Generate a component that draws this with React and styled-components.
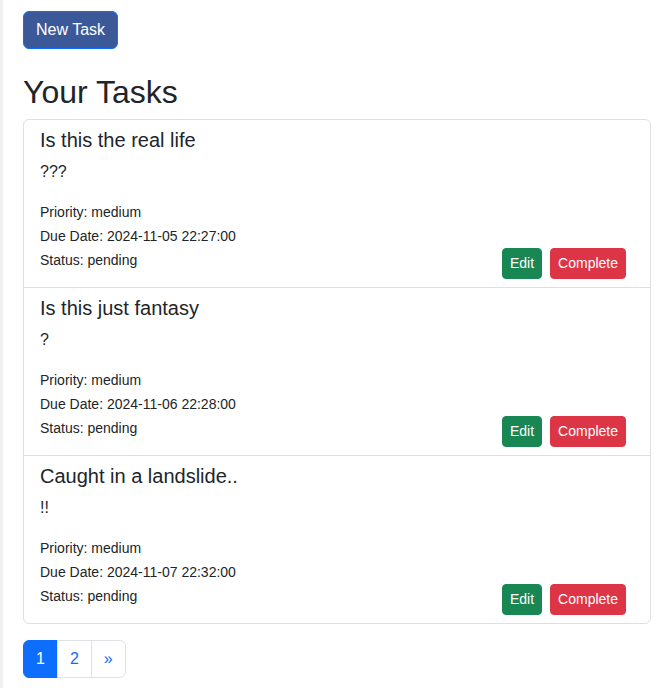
import styled, { createGlobalStyle } from 'styled-components';

const GlobalStyle = createGlobalStyle`
    html, body {
        margin: 0;
        padding: 0;
        background: #fff;
    }
    body {
        font-family: "Liberation Sans", Arial, sans-serif;
        color: #212529;
        font-size: 16px;
        line-height: 1.5;
    }
`;

const Page = styled.div`
    min-height: 688px;
    border-left: 3px solid #efefef;
    padding: 11px 11px 0 20px;
    box-sizing: border-box;
`;

const Button = styled.button`
    font-family: inherit;
    color: #fff;
    background: ${p => p.$bg};
    border: 1px solid ${p => p.$border || p.$bg};
    border-radius: ${p => (p.$small ? '4px' : '6px')};
    font-size: ${p => (p.$small ? '14px' : '16px')};
    line-height: ${p => (p.$small ? '21px' : '24px')};
    padding: ${p => (p.$small ? '4px 7px' : '6px 12px')};
    cursor: pointer;
`;

const NewTask = styled(Button)`
    display: block;
    margin-bottom: 24px;
`;

const Heading = styled.h2`
    font-size: 32px;
    font-weight: 500;
    line-height: 1.2;
    margin: 0 0 8px;
`;

const List = styled.ul`
    list-style: none;
    margin: 0 0 16px;
    padding: 0;
    border: 1px solid #dfdfdf;
    border-radius: 6px;
`;

const Item = styled.li`
    padding: 8px 16px;
    & + & {
        border-top: 1px solid #dfdfdf;
    }
`;

const Title = styled.h5`
    font-size: 20px;
    font-weight: 500;
    line-height: 24px;
    margin: 0 0 8px;
`;

const Desc = styled.p`
    margin: 0 0 16px;
    font-size: 16px;
    line-height: 24px;
`;

const Meta = styled.div`
    font-size: 14px;
    line-height: 24px;
`;

const StatusRow = styled.div`
    display: flex;
    justify-content: space-between;
    align-items: flex-start;
    font-size: 14px;
    line-height: 24px;
`;

const Actions = styled.div`
    display: flex;
    gap: 8px;
    margin-right: 8px;
`;

const Pagination = styled.ul`
    display: flex;
    list-style: none;
    margin: 0;
    padding: 0;
`;

const PageLink = styled.li`
    padding: 6px 12px;
    font-size: 16px;
    line-height: 24px;
    color: ${p => (p.$active ? '#fff' : '#0d6efd')};
    background: ${p => (p.$active ? '#0d6efd' : '#fff')};
    border: 1px solid ${p => (p.$active ? '#0d6efd' : '#dee2e6')};
    & + & {
        margin-left: -1px;
    }
    &:first-child {
        border-radius: 6px 0 0 6px;
    }
    &:last-child {
        border-radius: 0 6px 6px 0;
    }
`;

const tasks = [
    { title: 'Is this the real life', desc: '???', due: '2024-11-05 22:27:00' },
    { title: 'Is this just fantasy', desc: '?', due: '2024-11-06 22:28:00' },
    { title: 'Caught in a landslide..', desc: '!!', due: '2024-11-07 22:32:00' },
];

const App = () => {
    return (
        <Page>
            <GlobalStyle />
            <NewTask $bg="#3b5998" $border="#0d6efd">New Task</NewTask>
            <Heading>Your Tasks</Heading>
            <List>
                {tasks.map(t => (
                    <Item key={t.title}>
                        <Title>{t.title}</Title>
                        <Desc>{t.desc}</Desc>
                        <Meta>Priority: medium</Meta>
                        <Meta>Due Date: {t.due}</Meta>
                        <StatusRow>
                            <span>Status: pending</span>
                            <Actions>
                                <Button $small $bg="#198754">Edit</Button>
                                <Button $small $bg="#dc3545">Complete</Button>
                            </Actions>
                        </StatusRow>
                    </Item>
                ))}
            </List>
            <Pagination>
                <PageLink $active>1</PageLink>
                <PageLink>2</PageLink>
                <PageLink>»</PageLink>
            </Pagination>
        </Page>
    )
}

export default App
